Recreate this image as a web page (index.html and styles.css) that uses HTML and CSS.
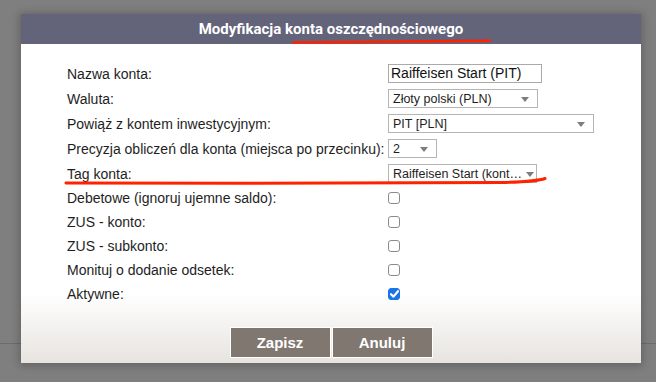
FILE: index.html
```html
<!DOCTYPE html>
<html lang="pl">
<head>
    <meta charset="UTF-8">
    <title>Modyfikacja konta oszczędnościowego</title>
    <link rel="stylesheet" href="styles.css">
</head>
<body>
    <div class="page"></div>

    <div class="dialog">
        <div class="dialog-title">Modyfikacja konta oszczędnościowego</div>
        <div class="dialog-body">
            <div class="form">
                <div class="row">
                    <label>Nazwa konta:</label>
                    <div class="text-input">Raiffeisen Start (PIT)</div>
                </div>
                <div class="row">
                    <label>Waluta:</label>
                    <div class="select w150"><span>Złoty polski (PLN)</span><i class="arrow"></i></div>
                </div>
                <div class="row">
                    <label>Powiąż z kontem inwestycyjnym:</label>
                    <div class="select w206"><span>PIT [PLN]</span><i class="arrow"></i></div>
                </div>
                <div class="row">
                    <label>Precyzja obliczeń dla konta (miejsca po przecinku):</label>
                    <div class="select w49"><span>2</span><i class="arrow"></i></div>
                </div>
                <div class="row">
                    <label>Tag konta:</label>
                    <div class="select w149"><span>Raiffeisen Start (kont…</span><i class="arrow"></i></div>
                </div>
                <div class="row check-row">
                    <label>Debetowe (ignoruj ujemne saldo):</label>
                    <span class="checkbox"></span>
                </div>
                <div class="row check-row">
                    <label>ZUS - konto:</label>
                    <span class="checkbox"></span>
                </div>
                <div class="row check-row">
                    <label>ZUS - subkonto:</label>
                    <span class="checkbox"></span>
                </div>
                <div class="row check-row">
                    <label>Monituj o dodanie odsetek:</label>
                    <span class="checkbox"></span>
                </div>
                <div class="row check-row">
                    <label>Aktywne:</label>
                    <span class="checkbox checked">
                        <svg width="9" height="8" viewBox="0 0 9 8"><path d="M1 4.2 L3.5 6.6 L8 1.2" fill="none" stroke="#fff" stroke-width="2.2" stroke-linecap="round" stroke-linejoin="round"/></svg>
                    </span>
                </div>
            </div>
            <div class="actions">
                <button class="btn">Zapisz</button>
                <button class="btn">Anuluj</button>
            </div>
        </div>
    </div>

    <!-- red marker annotations drawn on top of the screenshot -->
    <svg class="marks" width="656" height="382" viewBox="0 0 656 382">
        <path d="M293 42.5 C 360 42, 430 41.5, 490 40.8" fill="none" stroke="#ff2200" stroke-width="2.6" stroke-linecap="round"/>
        <path d="M66 183 C 200 183.5, 400 183.5, 500 182.5 C 525 182, 538 181, 545 178.5" fill="none" stroke="#ff2200" stroke-width="3" stroke-linecap="round"/>
    </svg>
</body>
</html>
```

FILE: styles.css
```css
body {
    margin: 0;
    width: 656px;
    height: 382px;
    background: #7f7f7f;
    font-family: 'Liberation Sans', Arial, sans-serif;
    color: #1e1e1e;
    overflow: hidden;
}
.page {
    height: 343px;
    border-bottom: 1px solid #6c6c6c;
}
.dialog {
    position: absolute;
    left: 21px;
    top: 14px;
    width: 620px;
    height: 349px;
    box-shadow: 0 1px 8px 2px rgba(0, 0, 0, 0.22);
    display: flex;
    flex-direction: column;
}
.dialog-title {
    height: 30px;
    line-height: 31px;
    background: #63637a;
    color: #fff;
    text-align: center;
    font-family: Roboto, 'Liberation Sans', sans-serif;
    font-weight: 700;
    font-size: 15px;
}
.dialog-body {
    flex: 1;
    background: linear-gradient(to bottom, #fff 0, #fff 78%, #e7e4e0 100%);
    padding: 17px 0 0 46px;
}
.form {
    display: flex;
    flex-direction: column;
}
.row {
    display: grid;
    grid-template-columns: 321px auto;
    align-items: center;
    height: 25px;
    font-size: 14px;
}
.check-row {
    height: 24px;
}
.text-input {
    width: 150px;
    height: 17px;
    line-height: 17px;
    border: 1px solid #aaa;
    padding-left: 2px;
    box-sizing: content-box;
    font-size: 14px;
    color: #111;
    white-space: nowrap;
}
.select {
    height: 17px;
    border: 1px solid #b5b5b5;
    background: #fff;
    display: flex;
    align-items: center;
    justify-content: space-between;
    gap: 4px;
    padding: 0 8px 0 4px;
    font-size: 12.5px;
    color: #1e1e1e;
    box-sizing: content-box;
}
.select span {
    white-space: nowrap;
}
.w150 { width: 136px; }
.w206 { width: 192px; }
.w49  { width: 35px; }
.w149 { width: 137px; padding-right: 6px; }
.arrow {
    flex: none;
    width: 0;
    height: 0;
    border-left: 4px solid transparent;
    border-right: 4px solid transparent;
    border-top: 5px solid #7d7d7d;
    margin-top: 2px;
}
.checkbox {
    width: 10px;
    height: 10px;
    border: 1.5px solid #8a8a8a;
    border-radius: 3px;
    background: #fff;
    display: flex;
    align-items: center;
    justify-content: center;
}
.checkbox.checked {
    background: #1a73e8;
    border-color: #1a73e8;
}
.actions {
    display: flex;
    justify-content: center;
    gap: 1px;
    margin-top: 21px;
    margin-left: -46px;
}
.btn {
    width: 101px;
    height: 31px;
    background: #7f7770;
    border: 1px solid #fff;
    color: #fff;
    font-family: 'Liberation Sans', Arial, sans-serif;
    font-weight: 700;
    font-size: 15px;
    cursor: pointer;
}
.marks {
    position: absolute;
    left: 0;
    top: 0;
    pointer-events: none;
}
```
